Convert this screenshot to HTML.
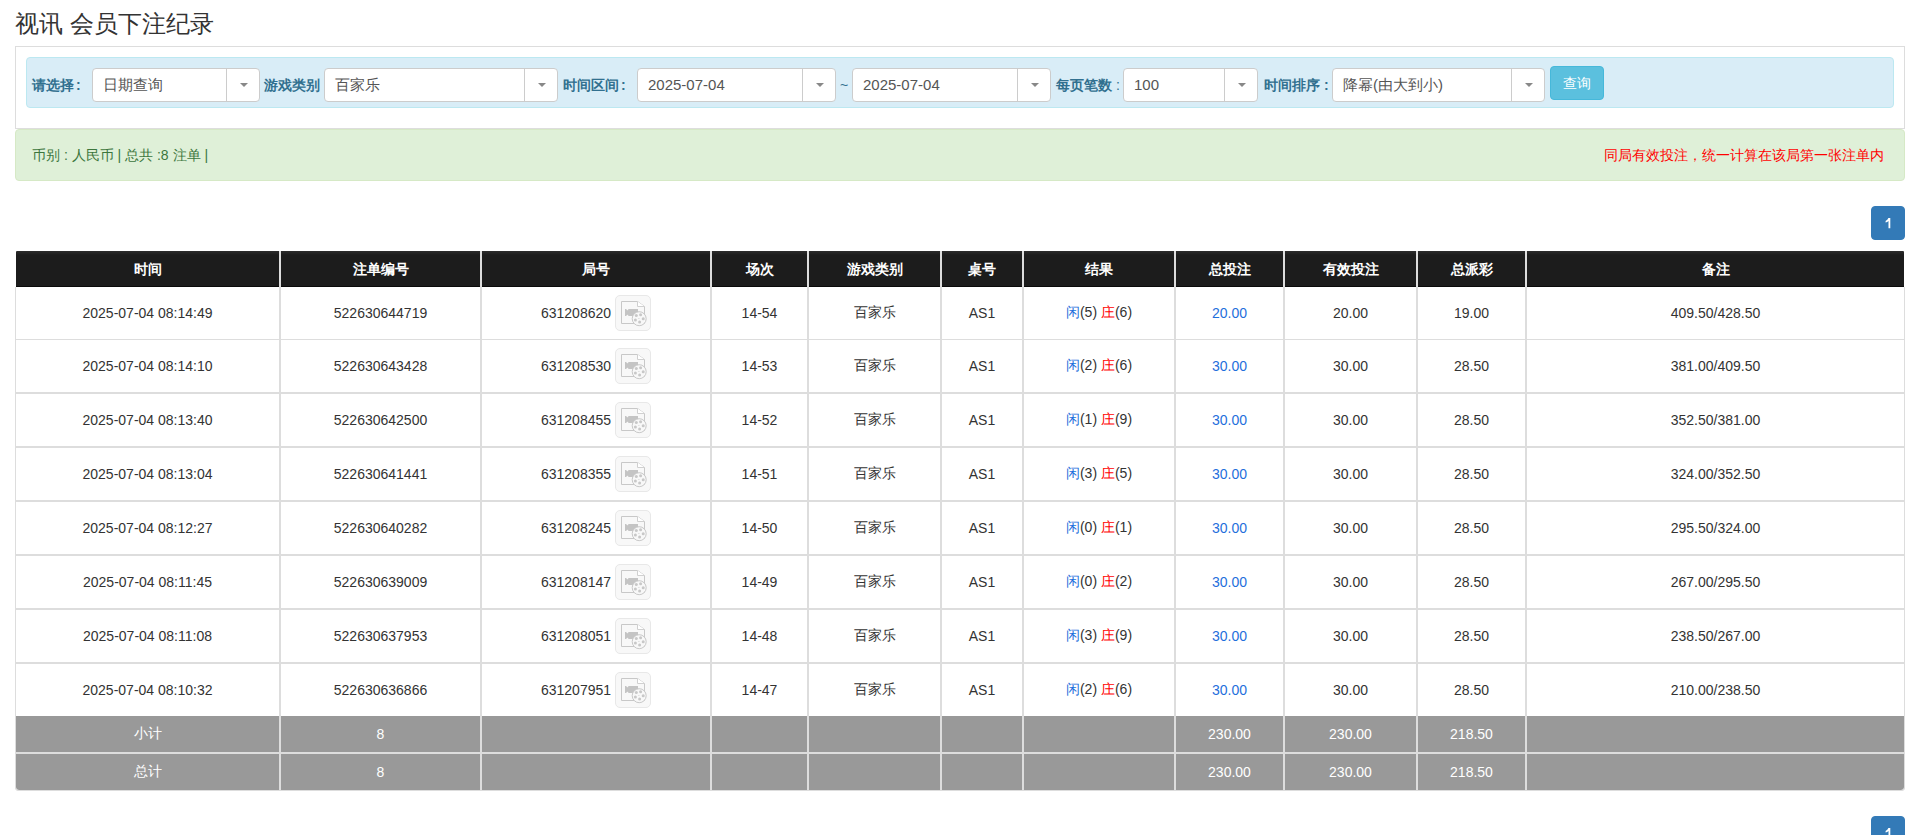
<!DOCTYPE html>
<html><head><meta charset="utf-8">
<style>
*{box-sizing:border-box}
html,body{margin:0;padding:0;background:#fff}
body{width:1919px;height:835px;position:relative;overflow:hidden;font-family:"Liberation Sans",sans-serif;font-size:14px;color:#333}
.title{position:absolute;left:15px;top:7px;font-size:24px;line-height:34px;color:#333;white-space:nowrap}
.outer{position:absolute;left:15px;top:46px;width:1890px;height:83px;border:1px solid #ddd;border-radius:0}
.info{position:absolute;left:26px;top:57px;width:1868px;height:51px;background:#d9edf7;border:1px solid #bce8f1;border-radius:4px}
.lab{position:absolute;top:76px;font-size:14px;font-weight:bold;color:#31708f;line-height:18px;white-space:nowrap}
.sel{position:absolute;top:68px;height:34px;background:#fff;border:1px solid #ccc;border-radius:4px}
.sel .tx{position:absolute;left:10px;top:7px;line-height:18px;color:#555;font-size:15px;white-space:nowrap}
.sel .dv{position:absolute;top:0;bottom:0;width:1px;background:#ccc}
.sel .ar{position:absolute;top:14px;width:0;height:0;border-left:4px solid transparent;border-right:4px solid transparent;border-top:4px solid #888}
.btn{position:absolute;left:1550px;top:66px;width:54px;height:34px;background:#5bc0de;border:1px solid #46b8da;border-radius:4px;color:#fff;font-size:14px;line-height:32px;text-align:center}
.alert{position:absolute;left:15px;top:129px;width:1890px;height:52px;background:#dff0d8;border:1px solid #d6e9c6;border-radius:4px}
.gtx{position:absolute;left:32px;top:146px;font-size:14px;line-height:18px;color:#3c763d;white-space:nowrap}
.rtx{position:absolute;right:35px;top:146px;font-size:14px;line-height:18px;color:#f00;white-space:nowrap}
.pg{position:absolute;left:1871px;width:34px;height:34px;background:#337ab7;border:1px solid #337ab7;border-radius:4px;color:#fff;text-align:center;line-height:32px;font-size:14px}
.tbl{position:absolute;left:15px;top:287px;width:1890px;height:504px;border:1px solid #ddd;border-top:0;border-radius:0 0 4px 4px}
.tbb{position:absolute;left:15px;top:716px;width:1890px;height:75px;border:1px solid #ddd;border-top:0;border-radius:0 0 4px 4px}
.thead{position:absolute;left:16px;top:251px;width:1888px;height:36px;background:linear-gradient(#2c2c2c,#1c1c1c 4px);border-bottom:1px solid #0a0a0a;border-radius:1px 1px 0 0}
.thead .c{font-weight:bold;color:#fff;line-height:36px;top:0;height:36px}
.c{position:absolute;top:0;bottom:0;display:flex;align-items:center;justify-content:center;white-space:nowrap;margin-left:-16px}
.tr{position:absolute;left:16px;width:1888px;background:#fff}
.tg{position:absolute;left:16px;width:1888px;background:#999;color:#fff}
.vs{position:absolute;width:2px}
.hl{position:absolute;left:16px;width:1888px;height:1px;background:#ddd}
.hg{position:absolute;left:16px;width:1888px;height:2px;background:#ddd}
.bl{color:#1f6fdc}
.rd{color:#f00}
.jw{display:inline-flex;align-items:center}.jh{position:relative;top:0px}.ic{display:inline-block;width:36px;height:36px;margin-left:4px;border:1px solid #e8e8e8;background:#f8f8f8;border-radius:5px;position:relative}
.ic svg{position:absolute;left:-1px;top:-1px}
</style></head><body>
<div class="title">视讯 会员下注纪录</div>
<div class="outer"></div>
<div class="info"></div>
<div class="lab" style="left:32px">请选择<span style="margin-left:2px">:</span></div>
<div class="sel" style="left:92px;width:168px"><span class="tx">日期查询</span><span class="dv" style="right:32px"></span><span class="ar" style="right:11px"></span></div>
<div class="lab" style="left:264px">游戏类别</div>
<div class="sel" style="left:324px;width:234px"><span class="tx">百家乐</span><span class="dv" style="right:32px"></span><span class="ar" style="right:11px"></span></div>
<div class="lab" style="left:563px">时间区间<span style="margin-left:2px">:</span></div>
<div class="sel" style="left:637px;width:199px"><span class="tx">2025-07-04</span><span class="dv" style="right:32px"></span><span class="ar" style="right:11px"></span></div>
<div class="lab" style="left:840px;font-weight:normal">~</div>
<div class="sel" style="left:852px;width:199px"><span class="tx">2025-07-04</span><span class="dv" style="right:32px"></span><span class="ar" style="right:11px"></span></div>
<div class="lab" style="left:1056px">每页笔数<span style="font-weight:normal"> :</span></div>
<div class="sel" style="left:1123px;width:135px"><span class="tx">100</span><span class="dv" style="right:32px"></span><span class="ar" style="right:11px"></span></div>
<div class="lab" style="left:1264px">时间排序 :</div>
<div class="sel" style="left:1332px;width:213px"><span class="tx">降幂(由大到小)</span><span class="dv" style="right:32px"></span><span class="ar" style="right:11px"></span></div>
<div class="btn">查询</div>
<div class="alert"></div>
<div class="gtx">币别 : 人民币 | 总共 :8 注单 |</div>
<div class="rtx">同局有效投注，统一计算在该局第一张注单内</div>
<div class="pg" style="top:206px"><svg width="34" height="34" viewBox="0 0 34 34" style="position:absolute;left:-1px;top:-1px"><path d="M17.4 12H19.3V22.2H17.5V14.9Q16.3 15.9 14.6 16.4V14.9Q16.6 14.1 17.4 12Z" fill="#fff"/></svg></div>
<div class="tbl"></div>
<div class="thead"><div class="c" style="left:16px;width:263px"><span>时间</span></div><div class="c" style="left:281px;width:199px"><span>注单编号</span></div><div class="c" style="left:482px;width:228px"><span>局号</span></div><div class="c" style="left:712px;width:95px"><span>场次</span></div><div class="c" style="left:809px;width:131px"><span>游戏类别</span></div><div class="c" style="left:942px;width:80px"><span>桌号</span></div><div class="c" style="left:1024px;width:150px"><span>结果</span></div><div class="c" style="left:1176px;width:107px"><span>总投注</span></div><div class="c" style="left:1285px;width:131px"><span>有效投注</span></div><div class="c" style="left:1418px;width:107px"><span>总派彩</span></div><div class="c" style="left:1527px;width:377px"><span>备注</span></div></div>
<div class="vs" style="left:279px;top:251px;height:36px;background:#ddd"></div><div class="vs" style="left:480px;top:251px;height:36px;background:#ddd"></div><div class="vs" style="left:710px;top:251px;height:36px;background:#ddd"></div><div class="vs" style="left:807px;top:251px;height:36px;background:#ddd"></div><div class="vs" style="left:940px;top:251px;height:36px;background:#ddd"></div><div class="vs" style="left:1022px;top:251px;height:36px;background:#ddd"></div><div class="vs" style="left:1174px;top:251px;height:36px;background:#ddd"></div><div class="vs" style="left:1283px;top:251px;height:36px;background:#ddd"></div><div class="vs" style="left:1416px;top:251px;height:36px;background:#ddd"></div><div class="vs" style="left:1525px;top:251px;height:36px;background:#ddd"></div>
<div class="tr" style="top:287px;height:52px"><div class="c" style="left:16px;width:263px"><span>2025-07-04 08:14:49</span></div><div class="c" style="left:281px;width:199px"><span>522630644719</span></div><div class="c" style="left:482px;width:228px"><span><span class="jw"><span class="jh">631208620</span><span class="ic"><svg width="36" height="36" viewBox="0 0 36 36"><path d="M6.5 6.5H22.5L29.5 11.5V28.5H6.5Z" fill="#f8f8f8" stroke="#c8c8c8" stroke-width="1"/><path d="M22.5 6.5V11.5H29.5" fill="#fff" stroke="#d0d0d0" stroke-width="1"/><path d="M10 14H10.8L13 15.4L13.4 14H23V21H13.4L13 19.6L10.8 21H10Z" fill="#c4c4c4"/><circle cx="24.2" cy="23.7" r="7" fill="#f8f8f8" stroke="#c8c8c8" stroke-width="1"/><circle cx="21.3" cy="20.6" r="1.5" fill="#c8c8c8"/><circle cx="25.6" cy="19.7" r="1.5" fill="#c8c8c8"/><circle cx="28.2" cy="23.7" r="1.5" fill="#c8c8c8"/><circle cx="24.6" cy="26.9" r="1.5" fill="#c8c8c8"/><circle cx="20.4" cy="25.1" r="1.5" fill="#c8c8c8"/><circle cx="23.9" cy="23.5" r="0.6" fill="#d0d0d0"/></svg></span></span></span></div><div class="c" style="left:712px;width:95px"><span>14-54</span></div><div class="c" style="left:809px;width:131px"><span>百家乐</span></div><div class="c" style="left:942px;width:80px"><span>AS1</span></div><div class="c" style="left:1024px;width:150px"><span><span class="bl">闲</span>(5) <span class="rd">庄</span>(6)</span></div><div class="c" style="left:1176px;width:107px"><span><span class="bl">20.00</span></span></div><div class="c" style="left:1285px;width:131px"><span>20.00</span></div><div class="c" style="left:1418px;width:107px"><span>19.00</span></div><div class="c" style="left:1527px;width:377px"><span>409.50/428.50</span></div></div>
<div class="hl" style="top:339px;height:1px"></div>
<div class="tr" style="top:340px;height:52px"><div class="c" style="left:16px;width:263px"><span>2025-07-04 08:14:10</span></div><div class="c" style="left:281px;width:199px"><span>522630643428</span></div><div class="c" style="left:482px;width:228px"><span><span class="jw"><span class="jh">631208530</span><span class="ic"><svg width="36" height="36" viewBox="0 0 36 36"><path d="M6.5 6.5H22.5L29.5 11.5V28.5H6.5Z" fill="#f8f8f8" stroke="#c8c8c8" stroke-width="1"/><path d="M22.5 6.5V11.5H29.5" fill="#fff" stroke="#d0d0d0" stroke-width="1"/><path d="M10 14H10.8L13 15.4L13.4 14H23V21H13.4L13 19.6L10.8 21H10Z" fill="#c4c4c4"/><circle cx="24.2" cy="23.7" r="7" fill="#f8f8f8" stroke="#c8c8c8" stroke-width="1"/><circle cx="21.3" cy="20.6" r="1.5" fill="#c8c8c8"/><circle cx="25.6" cy="19.7" r="1.5" fill="#c8c8c8"/><circle cx="28.2" cy="23.7" r="1.5" fill="#c8c8c8"/><circle cx="24.6" cy="26.9" r="1.5" fill="#c8c8c8"/><circle cx="20.4" cy="25.1" r="1.5" fill="#c8c8c8"/><circle cx="23.9" cy="23.5" r="0.6" fill="#d0d0d0"/></svg></span></span></span></div><div class="c" style="left:712px;width:95px"><span>14-53</span></div><div class="c" style="left:809px;width:131px"><span>百家乐</span></div><div class="c" style="left:942px;width:80px"><span>AS1</span></div><div class="c" style="left:1024px;width:150px"><span><span class="bl">闲</span>(2) <span class="rd">庄</span>(6)</span></div><div class="c" style="left:1176px;width:107px"><span><span class="bl">30.00</span></span></div><div class="c" style="left:1285px;width:131px"><span>30.00</span></div><div class="c" style="left:1418px;width:107px"><span>28.50</span></div><div class="c" style="left:1527px;width:377px"><span>381.00/409.50</span></div></div>
<div class="hl" style="top:392px;height:2px"></div>
<div class="tr" style="top:394px;height:52px"><div class="c" style="left:16px;width:263px"><span>2025-07-04 08:13:40</span></div><div class="c" style="left:281px;width:199px"><span>522630642500</span></div><div class="c" style="left:482px;width:228px"><span><span class="jw"><span class="jh">631208455</span><span class="ic"><svg width="36" height="36" viewBox="0 0 36 36"><path d="M6.5 6.5H22.5L29.5 11.5V28.5H6.5Z" fill="#f8f8f8" stroke="#c8c8c8" stroke-width="1"/><path d="M22.5 6.5V11.5H29.5" fill="#fff" stroke="#d0d0d0" stroke-width="1"/><path d="M10 14H10.8L13 15.4L13.4 14H23V21H13.4L13 19.6L10.8 21H10Z" fill="#c4c4c4"/><circle cx="24.2" cy="23.7" r="7" fill="#f8f8f8" stroke="#c8c8c8" stroke-width="1"/><circle cx="21.3" cy="20.6" r="1.5" fill="#c8c8c8"/><circle cx="25.6" cy="19.7" r="1.5" fill="#c8c8c8"/><circle cx="28.2" cy="23.7" r="1.5" fill="#c8c8c8"/><circle cx="24.6" cy="26.9" r="1.5" fill="#c8c8c8"/><circle cx="20.4" cy="25.1" r="1.5" fill="#c8c8c8"/><circle cx="23.9" cy="23.5" r="0.6" fill="#d0d0d0"/></svg></span></span></span></div><div class="c" style="left:712px;width:95px"><span>14-52</span></div><div class="c" style="left:809px;width:131px"><span>百家乐</span></div><div class="c" style="left:942px;width:80px"><span>AS1</span></div><div class="c" style="left:1024px;width:150px"><span><span class="bl">闲</span>(1) <span class="rd">庄</span>(9)</span></div><div class="c" style="left:1176px;width:107px"><span><span class="bl">30.00</span></span></div><div class="c" style="left:1285px;width:131px"><span>30.00</span></div><div class="c" style="left:1418px;width:107px"><span>28.50</span></div><div class="c" style="left:1527px;width:377px"><span>352.50/381.00</span></div></div>
<div class="hl" style="top:446px;height:2px"></div>
<div class="tr" style="top:448px;height:52px"><div class="c" style="left:16px;width:263px"><span>2025-07-04 08:13:04</span></div><div class="c" style="left:281px;width:199px"><span>522630641441</span></div><div class="c" style="left:482px;width:228px"><span><span class="jw"><span class="jh">631208355</span><span class="ic"><svg width="36" height="36" viewBox="0 0 36 36"><path d="M6.5 6.5H22.5L29.5 11.5V28.5H6.5Z" fill="#f8f8f8" stroke="#c8c8c8" stroke-width="1"/><path d="M22.5 6.5V11.5H29.5" fill="#fff" stroke="#d0d0d0" stroke-width="1"/><path d="M10 14H10.8L13 15.4L13.4 14H23V21H13.4L13 19.6L10.8 21H10Z" fill="#c4c4c4"/><circle cx="24.2" cy="23.7" r="7" fill="#f8f8f8" stroke="#c8c8c8" stroke-width="1"/><circle cx="21.3" cy="20.6" r="1.5" fill="#c8c8c8"/><circle cx="25.6" cy="19.7" r="1.5" fill="#c8c8c8"/><circle cx="28.2" cy="23.7" r="1.5" fill="#c8c8c8"/><circle cx="24.6" cy="26.9" r="1.5" fill="#c8c8c8"/><circle cx="20.4" cy="25.1" r="1.5" fill="#c8c8c8"/><circle cx="23.9" cy="23.5" r="0.6" fill="#d0d0d0"/></svg></span></span></span></div><div class="c" style="left:712px;width:95px"><span>14-51</span></div><div class="c" style="left:809px;width:131px"><span>百家乐</span></div><div class="c" style="left:942px;width:80px"><span>AS1</span></div><div class="c" style="left:1024px;width:150px"><span><span class="bl">闲</span>(3) <span class="rd">庄</span>(5)</span></div><div class="c" style="left:1176px;width:107px"><span><span class="bl">30.00</span></span></div><div class="c" style="left:1285px;width:131px"><span>30.00</span></div><div class="c" style="left:1418px;width:107px"><span>28.50</span></div><div class="c" style="left:1527px;width:377px"><span>324.00/352.50</span></div></div>
<div class="hl" style="top:500px;height:2px"></div>
<div class="tr" style="top:502px;height:52px"><div class="c" style="left:16px;width:263px"><span>2025-07-04 08:12:27</span></div><div class="c" style="left:281px;width:199px"><span>522630640282</span></div><div class="c" style="left:482px;width:228px"><span><span class="jw"><span class="jh">631208245</span><span class="ic"><svg width="36" height="36" viewBox="0 0 36 36"><path d="M6.5 6.5H22.5L29.5 11.5V28.5H6.5Z" fill="#f8f8f8" stroke="#c8c8c8" stroke-width="1"/><path d="M22.5 6.5V11.5H29.5" fill="#fff" stroke="#d0d0d0" stroke-width="1"/><path d="M10 14H10.8L13 15.4L13.4 14H23V21H13.4L13 19.6L10.8 21H10Z" fill="#c4c4c4"/><circle cx="24.2" cy="23.7" r="7" fill="#f8f8f8" stroke="#c8c8c8" stroke-width="1"/><circle cx="21.3" cy="20.6" r="1.5" fill="#c8c8c8"/><circle cx="25.6" cy="19.7" r="1.5" fill="#c8c8c8"/><circle cx="28.2" cy="23.7" r="1.5" fill="#c8c8c8"/><circle cx="24.6" cy="26.9" r="1.5" fill="#c8c8c8"/><circle cx="20.4" cy="25.1" r="1.5" fill="#c8c8c8"/><circle cx="23.9" cy="23.5" r="0.6" fill="#d0d0d0"/></svg></span></span></span></div><div class="c" style="left:712px;width:95px"><span>14-50</span></div><div class="c" style="left:809px;width:131px"><span>百家乐</span></div><div class="c" style="left:942px;width:80px"><span>AS1</span></div><div class="c" style="left:1024px;width:150px"><span><span class="bl">闲</span>(0) <span class="rd">庄</span>(1)</span></div><div class="c" style="left:1176px;width:107px"><span><span class="bl">30.00</span></span></div><div class="c" style="left:1285px;width:131px"><span>30.00</span></div><div class="c" style="left:1418px;width:107px"><span>28.50</span></div><div class="c" style="left:1527px;width:377px"><span>295.50/324.00</span></div></div>
<div class="hl" style="top:554px;height:2px"></div>
<div class="tr" style="top:556px;height:52px"><div class="c" style="left:16px;width:263px"><span>2025-07-04 08:11:45</span></div><div class="c" style="left:281px;width:199px"><span>522630639009</span></div><div class="c" style="left:482px;width:228px"><span><span class="jw"><span class="jh">631208147</span><span class="ic"><svg width="36" height="36" viewBox="0 0 36 36"><path d="M6.5 6.5H22.5L29.5 11.5V28.5H6.5Z" fill="#f8f8f8" stroke="#c8c8c8" stroke-width="1"/><path d="M22.5 6.5V11.5H29.5" fill="#fff" stroke="#d0d0d0" stroke-width="1"/><path d="M10 14H10.8L13 15.4L13.4 14H23V21H13.4L13 19.6L10.8 21H10Z" fill="#c4c4c4"/><circle cx="24.2" cy="23.7" r="7" fill="#f8f8f8" stroke="#c8c8c8" stroke-width="1"/><circle cx="21.3" cy="20.6" r="1.5" fill="#c8c8c8"/><circle cx="25.6" cy="19.7" r="1.5" fill="#c8c8c8"/><circle cx="28.2" cy="23.7" r="1.5" fill="#c8c8c8"/><circle cx="24.6" cy="26.9" r="1.5" fill="#c8c8c8"/><circle cx="20.4" cy="25.1" r="1.5" fill="#c8c8c8"/><circle cx="23.9" cy="23.5" r="0.6" fill="#d0d0d0"/></svg></span></span></span></div><div class="c" style="left:712px;width:95px"><span>14-49</span></div><div class="c" style="left:809px;width:131px"><span>百家乐</span></div><div class="c" style="left:942px;width:80px"><span>AS1</span></div><div class="c" style="left:1024px;width:150px"><span><span class="bl">闲</span>(0) <span class="rd">庄</span>(2)</span></div><div class="c" style="left:1176px;width:107px"><span><span class="bl">30.00</span></span></div><div class="c" style="left:1285px;width:131px"><span>30.00</span></div><div class="c" style="left:1418px;width:107px"><span>28.50</span></div><div class="c" style="left:1527px;width:377px"><span>267.00/295.50</span></div></div>
<div class="hl" style="top:608px;height:2px"></div>
<div class="tr" style="top:610px;height:52px"><div class="c" style="left:16px;width:263px"><span>2025-07-04 08:11:08</span></div><div class="c" style="left:281px;width:199px"><span>522630637953</span></div><div class="c" style="left:482px;width:228px"><span><span class="jw"><span class="jh">631208051</span><span class="ic"><svg width="36" height="36" viewBox="0 0 36 36"><path d="M6.5 6.5H22.5L29.5 11.5V28.5H6.5Z" fill="#f8f8f8" stroke="#c8c8c8" stroke-width="1"/><path d="M22.5 6.5V11.5H29.5" fill="#fff" stroke="#d0d0d0" stroke-width="1"/><path d="M10 14H10.8L13 15.4L13.4 14H23V21H13.4L13 19.6L10.8 21H10Z" fill="#c4c4c4"/><circle cx="24.2" cy="23.7" r="7" fill="#f8f8f8" stroke="#c8c8c8" stroke-width="1"/><circle cx="21.3" cy="20.6" r="1.5" fill="#c8c8c8"/><circle cx="25.6" cy="19.7" r="1.5" fill="#c8c8c8"/><circle cx="28.2" cy="23.7" r="1.5" fill="#c8c8c8"/><circle cx="24.6" cy="26.9" r="1.5" fill="#c8c8c8"/><circle cx="20.4" cy="25.1" r="1.5" fill="#c8c8c8"/><circle cx="23.9" cy="23.5" r="0.6" fill="#d0d0d0"/></svg></span></span></span></div><div class="c" style="left:712px;width:95px"><span>14-48</span></div><div class="c" style="left:809px;width:131px"><span>百家乐</span></div><div class="c" style="left:942px;width:80px"><span>AS1</span></div><div class="c" style="left:1024px;width:150px"><span><span class="bl">闲</span>(3) <span class="rd">庄</span>(9)</span></div><div class="c" style="left:1176px;width:107px"><span><span class="bl">30.00</span></span></div><div class="c" style="left:1285px;width:131px"><span>30.00</span></div><div class="c" style="left:1418px;width:107px"><span>28.50</span></div><div class="c" style="left:1527px;width:377px"><span>238.50/267.00</span></div></div>
<div class="hl" style="top:662px;height:2px"></div>
<div class="tr" style="top:664px;height:52px"><div class="c" style="left:16px;width:263px"><span>2025-07-04 08:10:32</span></div><div class="c" style="left:281px;width:199px"><span>522630636866</span></div><div class="c" style="left:482px;width:228px"><span><span class="jw"><span class="jh">631207951</span><span class="ic"><svg width="36" height="36" viewBox="0 0 36 36"><path d="M6.5 6.5H22.5L29.5 11.5V28.5H6.5Z" fill="#f8f8f8" stroke="#c8c8c8" stroke-width="1"/><path d="M22.5 6.5V11.5H29.5" fill="#fff" stroke="#d0d0d0" stroke-width="1"/><path d="M10 14H10.8L13 15.4L13.4 14H23V21H13.4L13 19.6L10.8 21H10Z" fill="#c4c4c4"/><circle cx="24.2" cy="23.7" r="7" fill="#f8f8f8" stroke="#c8c8c8" stroke-width="1"/><circle cx="21.3" cy="20.6" r="1.5" fill="#c8c8c8"/><circle cx="25.6" cy="19.7" r="1.5" fill="#c8c8c8"/><circle cx="28.2" cy="23.7" r="1.5" fill="#c8c8c8"/><circle cx="24.6" cy="26.9" r="1.5" fill="#c8c8c8"/><circle cx="20.4" cy="25.1" r="1.5" fill="#c8c8c8"/><circle cx="23.9" cy="23.5" r="0.6" fill="#d0d0d0"/></svg></span></span></span></div><div class="c" style="left:712px;width:95px"><span>14-47</span></div><div class="c" style="left:809px;width:131px"><span>百家乐</span></div><div class="c" style="left:942px;width:80px"><span>AS1</span></div><div class="c" style="left:1024px;width:150px"><span><span class="bl">闲</span>(2) <span class="rd">庄</span>(6)</span></div><div class="c" style="left:1176px;width:107px"><span><span class="bl">30.00</span></span></div><div class="c" style="left:1285px;width:131px"><span>30.00</span></div><div class="c" style="left:1418px;width:107px"><span>28.50</span></div><div class="c" style="left:1527px;width:377px"><span>210.00/238.50</span></div></div>
<div class="vs" style="left:279px;top:287px;height:429px;background:#ddd"></div><div class="vs" style="left:480px;top:287px;height:429px;background:#ddd"></div><div class="vs" style="left:710px;top:287px;height:429px;background:#ddd"></div><div class="vs" style="left:807px;top:287px;height:429px;background:#ddd"></div><div class="vs" style="left:940px;top:287px;height:429px;background:#ddd"></div><div class="vs" style="left:1022px;top:287px;height:429px;background:#ddd"></div><div class="vs" style="left:1174px;top:287px;height:429px;background:#ddd"></div><div class="vs" style="left:1283px;top:287px;height:429px;background:#ddd"></div><div class="vs" style="left:1416px;top:287px;height:429px;background:#ddd"></div><div class="vs" style="left:1525px;top:287px;height:429px;background:#ddd"></div>
<div class="tg" style="top:716px;height:36px"><div class="c" style="left:16px;width:263px"><span>小计</span></div><div class="c" style="left:281px;width:199px"><span>8</span></div><div class="c" style="left:482px;width:228px"><span></span></div><div class="c" style="left:712px;width:95px"><span></span></div><div class="c" style="left:809px;width:131px"><span></span></div><div class="c" style="left:942px;width:80px"><span></span></div><div class="c" style="left:1024px;width:150px"><span></span></div><div class="c" style="left:1176px;width:107px"><span>230.00</span></div><div class="c" style="left:1285px;width:131px"><span>230.00</span></div><div class="c" style="left:1418px;width:107px"><span>218.50</span></div><div class="c" style="left:1527px;width:377px"><span></span></div></div>
<div class="tg" style="top:754px;height:36px;border-radius:0 0 3px 3px"><div class="c" style="left:16px;width:263px"><span>总计</span></div><div class="c" style="left:281px;width:199px"><span>8</span></div><div class="c" style="left:482px;width:228px"><span></span></div><div class="c" style="left:712px;width:95px"><span></span></div><div class="c" style="left:809px;width:131px"><span></span></div><div class="c" style="left:942px;width:80px"><span></span></div><div class="c" style="left:1024px;width:150px"><span></span></div><div class="c" style="left:1176px;width:107px"><span>230.00</span></div><div class="c" style="left:1285px;width:131px"><span>230.00</span></div><div class="c" style="left:1418px;width:107px"><span>218.50</span></div><div class="c" style="left:1527px;width:377px"><span></span></div></div>
<div class="hg" style="top:752px"></div>
<div class="vs" style="left:279px;top:716px;height:74px;background:#ddd"></div><div class="vs" style="left:480px;top:716px;height:74px;background:#ddd"></div><div class="vs" style="left:710px;top:716px;height:74px;background:#ddd"></div><div class="vs" style="left:807px;top:716px;height:74px;background:#ddd"></div><div class="vs" style="left:940px;top:716px;height:74px;background:#ddd"></div><div class="vs" style="left:1022px;top:716px;height:74px;background:#ddd"></div><div class="vs" style="left:1174px;top:716px;height:74px;background:#ddd"></div><div class="vs" style="left:1283px;top:716px;height:74px;background:#ddd"></div><div class="vs" style="left:1416px;top:716px;height:74px;background:#ddd"></div><div class="vs" style="left:1525px;top:716px;height:74px;background:#ddd"></div>
<div class="tbb"></div>
<div class="pg" style="top:816px"><svg width="34" height="34" viewBox="0 0 34 34" style="position:absolute;left:-1px;top:-1px"><path d="M17.4 12H19.3V22.2H17.5V14.9Q16.3 15.9 14.6 16.4V14.9Q16.6 14.1 17.4 12Z" fill="#fff"/></svg></div>
</body></html>
